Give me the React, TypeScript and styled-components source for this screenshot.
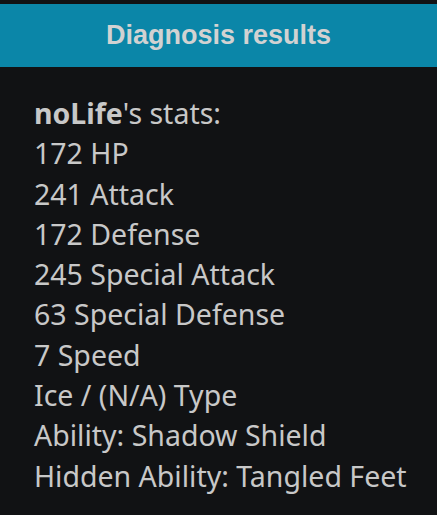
import React from "react";
import styled, { createGlobalStyle } from "styled-components";

const Global = createGlobalStyle`
  html, body { margin: 0; padding: 0; background: #111214; }
`;

const Page = styled.div`
  background: #111214;
  min-height: 515px;
  padding-top: 4px;
  box-sizing: border-box;
`;

const Header = styled.div`
  background: #0b86a8;
  height: 63px;
  display: flex;
  align-items: center;
  justify-content: center;
  font-family: "Liberation Sans", Arial, sans-serif;
  font-weight: bold;
  font-size: 27px;
  color: #d2d2d2;
`;

const Body = styled.div`
  padding: 26px 34px 0;
  display: flex;
  flex-direction: column;
  font-family: "Noto Sans", sans-serif;
  font-size: 28.5px;
  line-height: 40.3px;
  color: #c8c8c8;
`;

const Line = styled.div`
  white-space: nowrap;
`;

const Name = styled.b`
  font-weight: bold;
`;

const lines = [
  "172 HP",
  "241 Attack",
  "172 Defense",
  "245 Special Attack",
  "63 Special Defense",
  "7 Speed",
  "Ice / (N/A) Type",
  "Ability: Shadow Shield",
  "Hidden Ability: Tangled Feet",
];

export default function App() {
  return (
    <>
      <Global />
      <Page>
        <Header>Diagnosis results</Header>
        <Body>
          <Line>
            <Name>noLife</Name>'s stats:
          </Line>
          {lines.map((l) => (
            <Line key={l}>{l}</Line>
          ))}
        </Body>
      </Page>
    </>
  );
}
